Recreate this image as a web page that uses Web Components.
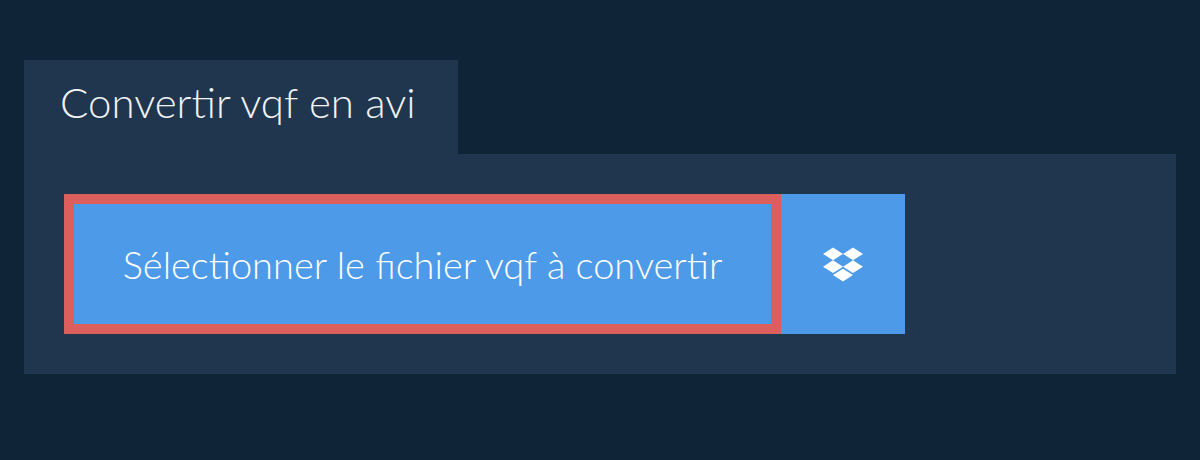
<!DOCTYPE html>
<html lang="fr">
<head>
<meta charset="utf-8">
<title>Convertir vqf en avi</title>
<style>
  html, body { margin: 0; background: #102438; }
  body { height: 460px; overflow: hidden; font-family: "Lato", "Liberation Sans", sans-serif; }
</style>
</head>
<body>
<convert-app>
  <span slot="title">Convertir vqf en avi</span>
  <file-button>Sélectionner le fichier vqf à convertir</file-button>
  <dropbox-button></dropbox-button>
</convert-app>

<script>
class ConvertApp extends HTMLElement {
  constructor() {
    super();
    this.attachShadow({ mode: 'open' });
    this.shadowRoot.innerHTML = `
      <style>
        :host { display: block; padding: 60px 24px 0; }
        .tab {
          width: 434px;
          height: 94px;
          box-sizing: border-box;
          padding: 14px 0 0 36px;
          background: #20364f;
          color: #f1f3f4;
          font: 300 42px/56px "Lato", "Liberation Sans", sans-serif;
        }
        .panel {
          display: flex;
          padding: 40px;
          background: #20364f;
        }
      </style>
      <div class="tab"><slot name="title"></slot></div>
      <div class="panel"><slot></slot></div>
    `;
  }
}

class FileButton extends HTMLElement {
  constructor() {
    super();
    this.attachShadow({ mode: 'open' });
    this.shadowRoot.innerHTML = `
      <style>
        :host {
          display: flex;
          align-items: center;
          justify-content: center;
          width: 717px;
          height: 140px;
          box-sizing: border-box;
          border: 10px solid #dd5f5d;
          background: #4d9ae8;
          color: #fff;
          font: 300 38px/48px "Lato", "Liberation Sans", sans-serif;
          white-space: nowrap;
        }
      </style>
      <slot></slot>
    `;
  }
}

class DropboxButton extends HTMLElement {
  constructor() {
    super();
    this.attachShadow({ mode: 'open' });
    this.shadowRoot.innerHTML = `
      <style>
        :host {
          display: flex;
          align-items: center;
          justify-content: center;
          width: 124px;
          height: 140px;
          background: #4d9ae8;
        }
        svg { display: block; width: 40px; height: 39px; fill: #fff; }
      </style>
      <svg viewBox="0 0 528 512" aria-hidden="true">
        <path d="M264.4 116.3l-132 84.3 132 84.3-132 84.3L0 284.1l132.3-84.3L0 116.3 132.3 32l132.1 84.3zM131.6 395.7l132-84.3 132 84.3-132 84.3-132-84.3zm132.8-111.6l132-84.3-132-83.6L395.7 32 528 116.3l-132.3 84.3L528 284.8l-132.3 84.3-131.3-85z"/>
      </svg>
    `;
  }
}

customElements.define('convert-app', ConvertApp);
customElements.define('file-button', FileButton);
customElements.define('dropbox-button', DropboxButton);
</script>
</body>
</html>
